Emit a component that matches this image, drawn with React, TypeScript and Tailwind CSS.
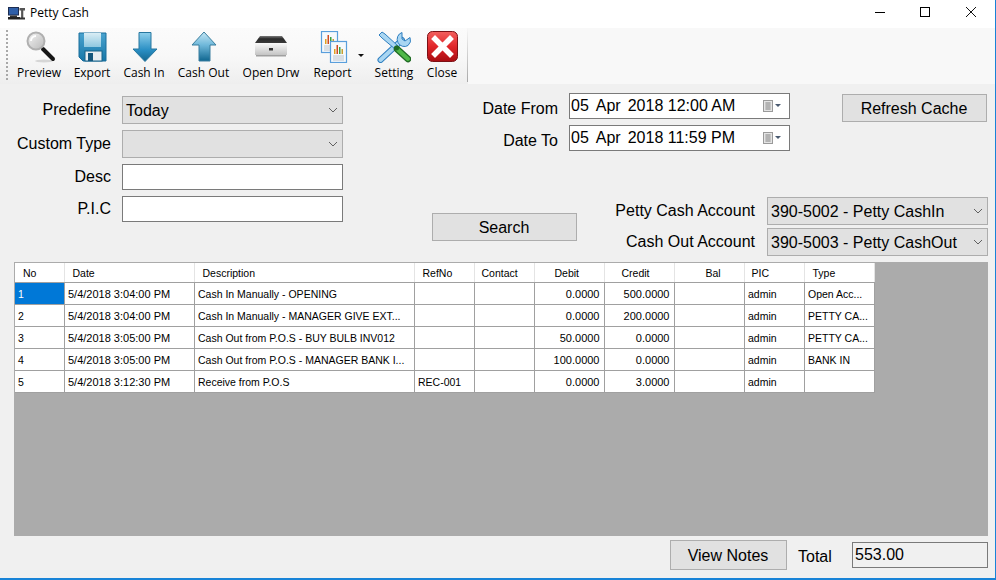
import React from "react";

const Chevron = () => (
  <svg width="10" height="6" viewBox="0 0 10 6" className="shrink-0">
    <polyline points="1,1 5,5 9,1" fill="none" stroke="#606060" strokeWidth="1" />
  </svg>
);

const Select = ({ value, w = "w-[221px]" }: { value: string; w?: string }) => (
  <div className={`${w} h-[28px] bg-[#e1e1e1] border border-[#adadad] flex items-center justify-between pl-[3px] pr-[3px] text-[16px] leading-none whitespace-nowrap`}>
    <span className="pt-[1px]">{value}</span>
    <span className="flex items-center pr-[1px]"><Chevron /></span>
  </div>
);

const Label = ({ children, w, extra = "" }: { children: string; w: string; extra?: string }) => (
  <div className={`${w} ${extra} text-right text-[16px] leading-none whitespace-nowrap`}>{children}</div>
);

const Btn = ({ children, w, h = "h-[28px]" }: { children: string; w: string; h?: string }) => (
  <div className={`${w} ${h} bg-[#e1e1e1] border border-[#adadad] flex items-center justify-center pt-[1px] pr-[1px] text-[16px] leading-none`}>{children}</div>
);

const Cal = () => (
  <svg width="24" height="12" viewBox="0 0 24 12">
    <rect x="1.5" y="0.5" width="9" height="11" fill="#e4e4e4" stroke="#9a9a9a" />
    <path d="M3 3h6M3 5h6M3 7h6M3 9h6M5 2v8M7 2v8" stroke="#8f8f8f" strokeWidth="0.7" />
    <polygon points="13,4 19,4 16,7" fill="#4a5a70" />
  </svg>
);

const DateBox = ({ parts }: { parts: [string, string, string] }) => (
  <div className="w-[221px] h-[26px] bg-white border border-[#7a7a7a] flex items-center justify-between pl-[1px] pr-[3px] text-[16px] leading-none whitespace-nowrap">
    <span>
      {parts[0]}
      <span className="ml-[7px]">{parts[1]}</span>
      <span className="ml-[7px]">{parts[2]}</span>
    </span>
    <Cal />
  </div>
);

const PreviewIcon = () => (
  <svg width="34" height="32" viewBox="0 0 34 32">
    <defs>
      <linearGradient id="lens" x1="0" y1="0" x2="1" y2="1">
        <stop offset="0" stopColor="#f4f4f4" />
        <stop offset="1" stopColor="#b9b9b9" />
      </linearGradient>
    </defs>
    <ellipse cx="22" cy="30" rx="9" ry="1.5" fill="#d6d6d6" />
    <line x1="21" y1="18" x2="31" y2="28" stroke="#161616" strokeWidth="4" strokeLinecap="round" />
    <circle cx="14" cy="10" r="8.5" fill="url(#lens)" stroke="#b0b0b0" strokeWidth="2" />
    <path d="M9 10a5 5 0 0 1 5-5" fill="none" stroke="#fff" strokeWidth="2" />
  </svg>
);

const ExportIcon = () => (
  <svg width="34" height="32" viewBox="0 0 34 32">
    <defs>
      <linearGradient id="fl" x1="0" y1="0" x2="0" y2="1">
        <stop offset="0" stopColor="#4aa3cf" />
        <stop offset="1" stopColor="#1677a8" />
      </linearGradient>
      <linearGradient id="fl2" x1="0" y1="0" x2="0" y2="1">
        <stop offset="0" stopColor="#d9edf5" />
        <stop offset="1" stopColor="#8fc8e0" />
      </linearGradient>
    </defs>
    <path d="M4 2h27v28H8l-4-4z" fill="url(#fl)" stroke="#1a6f9c" />
    <rect x="9" y="2" width="17" height="14" fill="url(#fl2)" />
    <rect x="10" y="20" width="17" height="10" fill="#e8eef2" stroke="#17628a" />
    <rect x="13" y="22" width="5" height="8" fill="#14577d" />
  </svg>
);

const CashInIcon = () => (
  <svg width="34" height="32" viewBox="0 0 34 32">
    <defs>
      <linearGradient id="ci" x1="0" y1="0" x2="0" y2="1">
        <stop offset="0" stopColor="#8fd0ec" />
        <stop offset="0.6" stopColor="#2a8fc4" />
        <stop offset="1" stopColor="#14668f" />
      </linearGradient>
    </defs>
    <polygon points="12,1.5 24,1.5 24,18 30,18 18,30.5 6,18 12,18" fill="url(#ci)" stroke="#27779f" />
  </svg>
);

const CashOutIcon = () => (
  <svg width="34" height="32" viewBox="0 0 34 32">
    <defs>
      <linearGradient id="co" x1="0" y1="0" x2="0" y2="1">
        <stop offset="0" stopColor="#c5e6f4" />
        <stop offset="0.45" stopColor="#6fb8da" />
        <stop offset="1" stopColor="#0f6690" />
      </linearGradient>
    </defs>
    <polygon points="17,1 29,14 23,14 23,30 12,30 12,14 5,14" fill="url(#co)" stroke="#3b7f9f" />
  </svg>
);

const DrawerIcon = () => (
  <svg width="34" height="32" viewBox="0 0 34 32">
    <defs>
      <linearGradient id="dr" x1="0" y1="0" x2="0" y2="1">
        <stop offset="0" stopColor="#fafafa" />
        <stop offset="1" stopColor="#c4c4c4" />
      </linearGradient>
      <linearGradient id="drt" x1="0" y1="0" x2="0" y2="1">
        <stop offset="0" stopColor="#7a7a7a" />
        <stop offset="0.4" stopColor="#2b2b2b" />
        <stop offset="1" stopColor="#3a3a3a" />
      </linearGradient>
    </defs>
    <polygon points="6,5 28,5 33,12 1,12" fill="url(#drt)" />
    <rect x="1" y="12" width="32" height="12" fill="url(#dr)" />
    <rect x="15" y="17" width="4" height="2.5" fill="#333" />
    <rect x="2" y="24" width="30" height="1.5" fill="#a0a0a0" />
  </svg>
);

const Page = ({ x, y }: { x: number; y: number }) => (
  <g transform={`translate(${x} ${y})`}>
    <rect x="0.5" y="0.5" width="16" height="21" fill="#f6f9fc" stroke="#5a9fdc" strokeWidth="1.2" />
    <rect x="4" y="8" width="1.5" height="5" fill="#e0a020" />
    <rect x="6.5" y="4" width="1.5" height="9" fill="#d14a20" />
    <rect x="9" y="6" width="1.5" height="7" fill="#3aa040" />
    <rect x="11.5" y="8" width="1.5" height="5" fill="#c8a030" />
    <path d="M3 15h11M3 17h11M3 19h11" stroke="#b0b8c0" strokeWidth="0.8" />
  </g>
);

const ReportIcon = () => (
  <svg width="34" height="32" viewBox="0 0 34 32">
    <Page x={5} y={0} />
    <Page x={14} y={10} />
  </svg>
);

const SettingIcon = () => (
  <svg width="34" height="32" viewBox="0 0 34 32">
    <line x1="3.5" y1="29" x2="25" y2="9" stroke="#2f7fc0" strokeWidth="6" strokeLinecap="round" />
    <line x1="3.5" y1="29" x2="25" y2="9" stroke="#a9d6f2" strokeWidth="4" strokeLinecap="round" />
    <path d="M25 1.5a7 7 0 0 0-4 10 7 7 0 0 0 10 3 7 7 0 0 0 2-8l-5 3.5-3-2z" fill="#a9d6f2" stroke="#2f7fc0" strokeWidth="1" />
    <polygon points="2,4 5,1 8,3 21,15 18,18 5,7" fill="#a9d6f2" stroke="#2f7fc0" strokeWidth="1" />
    <line x1="20" y1="18" x2="31" y2="28" stroke="#1f6b24" strokeWidth="6.5" strokeLinecap="round" />
    <line x1="20" y1="18" x2="31" y2="28" stroke="#4fb848" strokeWidth="4" strokeLinecap="round" />
    <circle cx="19.5" cy="17" r="2.5" fill="#1f6b24" />
  </svg>
);

const CloseIcon = () => (
  <svg width="34" height="32" viewBox="0 0 34 32">
    <defs>
      <linearGradient id="cl" x1="0" y1="0" x2="0" y2="1">
        <stop offset="0" stopColor="#f2605e" />
        <stop offset="0.5" stopColor="#e1262a" />
        <stop offset="1" stopColor="#a80d12" />
      </linearGradient>
    </defs>
    <rect x="2.5" y="0.5" width="30" height="30" rx="5" fill="url(#cl)" stroke="#7c1015" />
    <path d="M10 8l15 15M25 8L10 23" stroke="#fff" strokeWidth="5.5" strokeLinecap="square" />
  </svg>
);

const tools = [
  { label: "Preview", w: "w-[48px]", icon: <PreviewIcon /> },
  { label: "Export", w: "w-[58px]", icon: <ExportIcon /> },
  { label: "Cash In", w: "w-[46px]", icon: <CashInIcon /> },
  { label: "Cash Out", w: "w-[73px]", icon: <CashOutIcon /> },
  { label: "Open Drw", w: "w-[62px]", icon: <DrawerIcon /> },
  { label: "Report", w: "w-[61px]", icon: <ReportIcon /> },
  { label: "Setting", w: "w-[62px]", icon: <SettingIcon /> },
  { label: "Close", w: "w-[34px]", icon: <CloseIcon /> },
];

const cols = [
  { name: "No", w: "w-[49px]", h: "pl-[8px]" },
  { name: "Date", w: "w-[130px]", h: "pl-[8px]" },
  { name: "Description", w: "w-[220px]", h: "pl-[8px]" },
  { name: "RefNo", w: "w-[60px]", h: "pl-[8px]" },
  { name: "Contact", w: "w-[60px]", h: "pl-[7px]" },
  { name: "Debit", w: "w-[70px]", h: "pl-[20px]" },
  { name: "Credit", w: "w-[70px]", h: "pl-[17px]" },
  { name: "Bal", w: "w-[70px]", h: "pl-[31px]" },
  { name: "PIC", w: "w-[60px]", h: "pl-[7px]" },
  { name: "Type", w: "w-[70px]", h: "pl-[8px]" },
];

const rows = [
  ["1", "5/4/2018 3:04:00 PM", "Cash In Manually - OPENING", "", "", "0.0000", "500.0000", "", "admin", "Open Acc..."],
  ["2", "5/4/2018 3:04:00 PM", "Cash In Manually - MANAGER GIVE EXT...", "", "", "0.0000", "200.0000", "", "admin", "PETTY CA..."],
  ["3", "5/4/2018 3:05:00 PM", "Cash Out from P.O.S - BUY BULB INV012", "", "", "50.0000", "0.0000", "", "admin", "PETTY CA..."],
  ["4", "5/4/2018 3:05:00 PM", "Cash Out from P.O.S - MANAGER BANK I...", "", "", "100.0000", "0.0000", "", "admin", "BANK IN"],
  ["5", "5/4/2018 3:12:30 PM", "Receive from P.O.S", "REC-001", "", "0.0000", "3.0000", "", "admin", ""],
];

export default function App() {
  return (
    <div className="w-[996px] h-[580px] overflow-hidden bg-[#f0f0f0] text-black border-r border-b-2 border-[#1883d7] flex flex-col font-['Liberation_Sans',Arial,sans-serif]">
      {/* Title bar */}
      <div className="h-[28px] bg-white flex items-center shrink-0">
        <svg width="17" height="13" viewBox="0 0 17 13" className="ml-[8px] -mt-[2px]">
          <rect x="0.5" y="0.5" width="10" height="7.5" fill="#2f5fa8" stroke="#1d2d50" />
          <rect x="2" y="8.5" width="7" height="1.5" fill="#333" />
          <rect x="0" y="10" width="12" height="2.5" fill="#222" />
          <path d="M11.5 1H17v2.5h-1.7V11h-2.2V3.5h-1.6z" fill="#555" />
          <rect x="12" y="10.5" width="5" height="2" fill="#333" />
        </svg>
        <span className="ml-[5px] -mt-[2px] text-[12px] leading-none font-['Open_Sans',sans-serif]">Petty Cash</span>
        <div className="ml-auto flex items-center pr-[19px] -mt-[4px]">
          <div className="w-[10px] h-[1px] bg-black mr-[35px]" />
          <div className="w-[10px] h-[10px] border border-black mr-[36px]" />
          <svg width="10" height="10" viewBox="0 0 10 10">
            <path d="M0 0l10 10M10 0L0 10" stroke="#111" strokeWidth="1" />
          </svg>
        </div>
      </div>

      {/* Toolbar */}
      <div className="h-[56px] shrink-0 bg-[#f8f8f8] flex">
        <div className="relative w-[468px] h-full flex bg-gradient-to-b from-[#fbfbfb] via-[#f8f8f8] to-[#eeeeee]">
          <div className="w-[2px] h-[50px] ml-[6px] mt-[2px] mr-[7px] border-l-2 border-dotted border-[#a8a8a8]" />
          {tools.map((t) => (
            <div key={t.label} className={`${t.w} relative flex flex-col items-center pt-[3px]`}>
              <div className="h-[32px] w-[34px] shrink-0">{t.icon}</div>
              <div className="mt-[2px] text-[12px] leading-[16px] whitespace-nowrap font-['Open_Sans',sans-serif]">{t.label}</div>
              {t.label === "Report" && (
                <svg width="6" height="3" viewBox="0 0 6 3" className="absolute left-[56px] top-[26px]">
                  <polygon points="0,0 6,0 3,3" fill="#111" />
                </svg>
              )}
            </div>
          ))}
          <div className="absolute right-0 top-0 bottom-[2px] w-[1px] bg-gradient-to-b from-[#f8f8f8] to-[#a8a8a8]" />
        </div>
      </div>

      {/* Filter form */}
      <div className="h-[178px] shrink-0 flex pr-[7px]">
        <div className="w-[343px] shrink-0 flex flex-col pt-[12px]">
          <div className="flex items-center h-[28px]"><Label w="w-[111px]">Predefine</Label><div className="ml-[11px]"><Select value="Today" /></div></div>
          <div className="flex items-center h-[28px] mt-[6px]"><Label w="w-[111px]">Custom Type</Label><div className="ml-[11px]"><Select value="" /></div></div>
          <div className="flex items-center h-[26px] mt-[6px]"><Label w="w-[111px]">Desc</Label><div className="ml-[11px] w-[221px] h-[26px] bg-white border border-[#7a7a7a]" /></div>
          <div className="flex items-center h-[26px] mt-[6px]"><Label w="w-[111px]">P.I.C</Label><div className="ml-[11px] w-[221px] h-[26px] bg-white border border-[#7a7a7a]" /></div>
        </div>
        <div className="ml-[89px] flex-1 flex flex-col pt-[9px]">
          <div className="flex items-start">
            <div className="w-[358px] flex flex-col gap-[6px]">
              <div className="flex items-center justify-end gap-[11px]"><Label w="w-[100px]" extra="pt-[5px]">Date From</Label><DateBox parts={["05", "Apr", "2018 12:00 AM"]} /></div>
              <div className="flex items-center justify-end gap-[11px]"><Label w="w-[100px]" extra="pt-[5px]">Date To</Label><DateBox parts={["05", "Apr", "2018 11:59 PM"]} /></div>
            </div>
            <div className="ml-[52px] mt-[1px]"><Btn w="w-[145px]">Refresh Cache</Btn></div>
          </div>
          <div className="flex items-start mt-[46px]">
            <div className="mt-[16px]"><Btn w="w-[145px]">Search</Btn></div>
            <div className="ml-auto flex flex-col gap-[3px]">
              <div className="flex items-center gap-[12px]"><Label w="w-[150px]">Petty Cash Account</Label><Select value="390-5002 - Petty CashIn" /></div>
              <div className="flex items-center gap-[12px]"><Label w="w-[150px]">Cash Out Account</Label><Select value="390-5003 - Petty CashOut" /></div>
            </div>
          </div>
        </div>
      </div>

      {/* Grid */}
      <div className="h-[274px] shrink-0 ml-[14px] mr-[7px] bg-[#ababab] pt-[1px] pl-[1px]">
        <table className="table-fixed border-collapse w-[859px] text-[10.5px] leading-none">
          <thead>
            <tr className="h-[19px] bg-white">
              {cols.map((c) => (
                <th key={c.name} className={`${c.w} ${c.h} font-normal text-left p-0 pt-[2px] border-r border-r-[#e4e4e4] border-b border-b-[#a0a0a0] whitespace-nowrap`}>
                  {c.name}
                </th>
              ))}
            </tr>
          </thead>
          <tbody>
            {rows.map((r, i) => (
              <tr key={i} className="h-[22px] bg-white">
                {r.map((v, j) => {
                  const right = j === 5 || j === 6;
                  const selected = i === 0 && j === 0;
                  const wide = j === 1 || right;
                  return (
                    <td
                      key={j}
                      className={`border-r border-b border-[#a0a0a0] p-0 pt-[2px] whitespace-nowrap overflow-hidden ${wide ? "text-[11px]" : ""} ${right ? "text-right pr-[4px]" : j === 0 ? "text-left pl-[3px]" : "text-left pl-[3.5px]"} ${selected ? "bg-[#0078d7] text-white" : ""}`}
                    >
                      {v}
                    </td>
                  );
                })}
              </tr>
            ))}
          </tbody>
        </table>
      </div>

      {/* Footer */}
      <div className="flex-1 flex items-start pr-[7px]">
        <div className="ml-[670px] mt-[4px]"><Btn w="w-[117px]" h="h-[30px]">View Notes</Btn></div>
        <div className="ml-[11px] mt-[13px] text-[16px] leading-none">Total</div>
        <div className="ml-auto mt-[6px] w-[136px] h-[26px] bg-[#f0f0f0] border border-[#7a7a7a] flex items-center pl-[2px] text-[16px] leading-none">553.00</div>
      </div>
    </div>
  );
}
